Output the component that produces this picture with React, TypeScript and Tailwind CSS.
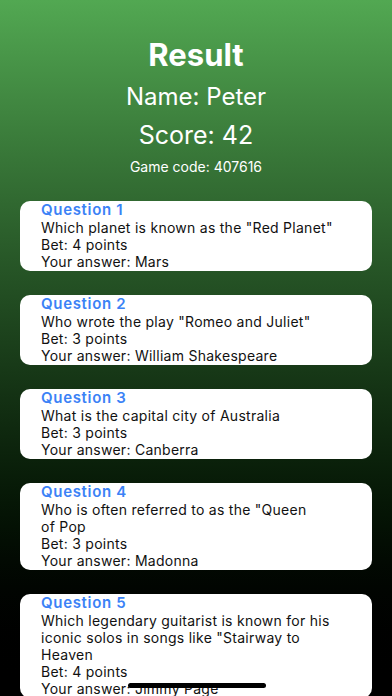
import React from 'react';

interface Answer {
    title: string;
    question: string[];
    bet: number;
    answer: string;
}

const answers: Answer[] = [
    { title: 'Question 1', question: ['Which planet is known as the "Red Planet"'], bet: 4, answer: 'Mars' },
    { title: 'Question 2', question: ['Who wrote the play "Romeo and Juliet"'], bet: 3, answer: 'William Shakespeare' },
    { title: 'Question 3', question: ['What is the capital city of Australia'], bet: 3, answer: 'Canberra' },
    { title: 'Question 4', question: ['Who is often referred to as the "Queen', 'of Pop'], bet: 3, answer: 'Madonna' },
    {
        title: 'Question 5',
        question: ['Which legendary guitarist is known for his', 'iconic solos in songs like "Stairway to', 'Heaven'],
        bet: 4,
        answer: 'Jimmy Page',
    },
];

function AnswerCard({ item }: { item: Answer }) {
    return (
        <div className="bg-white rounded-[10px] pl-[21px] pr-4 pb-[1px] text-[#111] text-[14px] leading-[17px] tracking-[0.019em]">
            <div className="text-[15px] leading-[18px] font-semibold tracking-[0.045em] text-[#3b82f6]">{item.title}</div>
            {item.question.map((line, i) => (
                <div key={i} className="whitespace-nowrap">{line}</div>
            ))}
            <div>Bet: {item.bet} points</div>
            <div>Your answer: {item.answer}</div>
        </div>
    );
}

export default function App() {
    return (
        <div
            className="relative w-[392px] h-[696px] overflow-hidden bg-gradient-to-b from-[#52a852] to-[#000000] text-white"
            style={{ fontFamily: 'Inter, "Liberation Sans", sans-serif' }}
        >
            <div className="flex flex-col items-center pt-[38px]">
                <h1 className="text-[31px] leading-[34px] font-bold">Result</h1>
                <div className="mt-[11px] text-[24px] leading-[28px]">Name: Peter</div>
                <div className="mt-[9px] text-[25px] leading-[30px]">Score: 42</div>
                <div className="mt-[9px] text-[14px] leading-[16px]">Game code: 407616</div>
            </div>

            <div className="mt-[26px] mx-[20px] flex flex-col gap-[24px]">
                {answers.map((a) => (
                    <AnswerCard key={a.title} item={a} />
                ))}
            </div>

            {/* home indicator */}
            <div className="absolute bottom-[8px] left-[128px] w-[138px] h-[5px] rounded-full bg-black" />
        </div>
    );
}
